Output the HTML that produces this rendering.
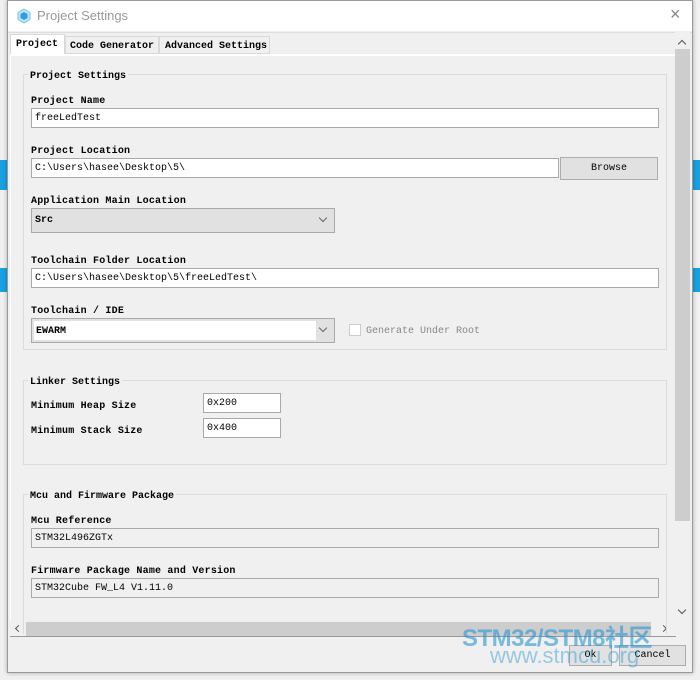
<!DOCTYPE html><html><head><style>
*{box-sizing:border-box;margin:0;padding:0}
body{width:700px;height:680px;background:#f0f0f0;position:relative;overflow:hidden;font-family:"Liberation Mono","Noto Sans CJK SC",monospace;font-size:10px;color:#000}
.a{position:absolute}
.lbl{position:absolute;font-size:10px;font-weight:bold;letter-spacing:0.2px;margin-top:2px}
.inp{position:absolute;background:#fff;border:1px solid #a9a9a9;padding-left:3px;padding-top:2px;line-height:15px;font-size:10px}
.grp{position:absolute;border:1px solid #dcdcdc}
.gt{position:absolute;background:#f0f0f0;padding:0 2px;font-size:10px;font-weight:bold;top:-4px;left:4px}
.btn{position:absolute;background:#e1e1e1;border:1px solid #adadad;text-align:center;font-size:10px}
.chev{position:absolute;width:7px;height:7px;border-right:1.3px solid #555;border-bottom:1.3px solid #555;transform:rotate(45deg)}
</style></head><body>
<div class="a" style="left:0;top:160px;width:7px;height:30px;background:#1aa0e0"></div>
<div class="a" style="left:0;top:268px;width:7px;height:24px;background:#1aa0e0"></div>
<div class="a" style="left:692px;top:160px;width:8px;height:30px;background:#1aa0e0"></div>
<div class="a" style="left:692px;top:268px;width:8px;height:24px;background:#1aa0e0"></div>
<div class="a" style="left:7px;top:0;width:686px;height:673px;background:#f0f0f0;border:1px solid #999;box-shadow:0 0 4px rgba(0,0,0,.3)"></div>
<div class="a" style="left:8px;top:1px;width:684px;height:30px;background:#fff"></div>
<svg class="a" style="left:16px;top:8px" width="16" height="16" viewBox="0 0 16 16"><path d="M8 1L14 4.5V11.5L8 15L2 11.5V4.5Z" fill="#bfe3f5" stroke="#7cc6ea"/><path d="M8 4L11.5 6V10L8 12L4.5 10V6Z" fill="#2d9fdc"/></svg>
<div class="a" style="left:37px;top:8px;font-family:'Liberation Sans',sans-serif;font-size:13px;color:#999">Project Settings</div>
<div class="a" style="left:670px;top:4px;font-family:'Liberation Sans',sans-serif;font-size:18px;color:#888">×</div>
<!-- tabs -->
<div class="a" style="left:8px;top:32px;width:684px;height:1px;background:#ddd"></div>
<div class="a" style="left:10px;top:34px;width:55px;height:22px;background:#fff;border:1px solid #d9d9d9;border-bottom:none;padding:4px 0 0 5px;font-weight:bold">Project</div>
<div class="a" style="left:65px;top:36px;width:94px;height:18px;background:#f0f0f0;border:1px solid #d9d9d9;padding:4px 0 0 4px;font-weight:bold">Code Generator</div>
<div class="a" style="left:159px;top:36px;width:111px;height:18px;background:#f0f0f0;border:1px solid #d9d9d9;padding:4px 0 0 5px;font-weight:bold">Advanced Settings</div>
<div class="a" style="left:10px;top:54px;width:666px;height:2px;background:#fff"></div>
<div class="a" style="left:10px;top:56px;width:666px;height:565px;background:#f0f0f0;border-left:1px solid #fff"></div>
<!-- vertical scrollbar -->
<div class="a" style="left:675px;top:32px;width:15px;height:589px;background:#f0f0f0"></div>
<div class="a" style="left:675px;top:49px;width:15px;height:472px;background:#cdcdcd"></div>
<div class="chev" style="left:679px;top:41px;transform:rotate(225deg);width:6px;height:6px"></div>
<div class="chev" style="left:679px;top:607px;width:6px;height:6px"></div>
<!-- horizontal scrollbar -->
<div class="a" style="left:10px;top:621px;width:666px;height:16px;background:#f0f0f0;border-bottom:1px solid #999"></div>
<div class="a" style="left:26px;top:622px;width:625px;height:14px;background:#cdcdcd"></div>
<div class="chev" style="left:16px;top:626px;transform:rotate(135deg);width:5px;height:5px"></div>
<div class="chev" style="left:661px;top:626px;transform:rotate(-45deg);width:5px;height:5px"></div>
<!-- group 1 -->
<div class="grp" style="left:23px;top:74px;width:644px;height:276px"><div class="gt">Project Settings</div></div>
<div class="lbl" style="left:31px;top:94px">Project Name</div>
<div class="inp" style="left:31px;top:108px;width:628px;height:20px">freeLedTest</div>
<div class="lbl" style="left:31px;top:144px">Project Location</div>
<div class="inp" style="left:31px;top:158px;width:528px;height:20px">C:\Users\hasee\Desktop\5\</div>
<div class="btn" style="left:560px;top:157px;width:98px;height:23px;line-height:22px">Browse</div>
<div class="lbl" style="left:31px;top:194px">Application Main Location</div>
<div class="inp" style="left:31px;top:208px;width:304px;height:25px;background:#e1e1e1;line-height:20px;font-weight:bold">Src</div>
<div class="chev" style="left:320px;top:215px;width:6px;height:6px;border-color:#666;border-width:1px"></div>
<div class="lbl" style="left:31px;top:254px">Toolchain Folder Location</div>
<div class="inp" style="left:31px;top:268px;width:628px;height:20px">C:\Users\hasee\Desktop\5\freeLedTest\</div>
<div class="lbl" style="left:31px;top:304px">Toolchain / IDE</div>
<div class="inp" style="left:31px;top:318px;width:304px;height:25px;background:#e1e1e1;padding:2px"><div style="background:#fff;height:19px;width:282px;line-height:21px;padding-left:2px;font-weight:bold">EWARM</div></div>
<div class="chev" style="left:320px;top:325px;width:6px;height:6px;border-color:#666;border-width:1px"></div>
<div class="a" style="left:349px;top:324px;width:12px;height:12px;border:1px solid #ccc;background:#fff"></div>
<div class="a" style="left:366px;top:326px;color:#888">Generate Under Root</div>
<!-- group 2 -->
<div class="grp" style="left:23px;top:380px;width:644px;height:85px"><div class="gt">Linker Settings</div></div>
<div class="lbl" style="left:31px;top:399px">Minimum Heap Size</div>
<div class="inp" style="left:203px;top:393px;width:78px;height:20px">0x200</div>
<div class="lbl" style="left:31px;top:424px">Minimum Stack Size</div>
<div class="inp" style="left:203px;top:418px;width:78px;height:20px">0x400</div>
<!-- group 3 -->
<div class="grp" style="left:23px;top:494px;width:644px;height:140px;border-bottom:none"><div class="gt">Mcu and Firmware Package</div></div>
<div class="lbl" style="left:31px;top:514px">Mcu Reference</div>
<div class="inp" style="left:31px;top:528px;width:628px;height:20px;background:#f0f0f0">STM32L496ZGTx</div>
<div class="lbl" style="left:31px;top:564px">Firmware Package Name and Version</div>
<div class="inp" style="left:31px;top:578px;width:628px;height:20px;background:#f0f0f0">STM32Cube FW_L4 V1.11.0</div>
<!-- buttons -->
<div class="btn" style="left:569px;top:645px;width:43px;height:21px;line-height:20px">Ok</div>
<div class="btn" style="left:619px;top:645px;width:67px;height:21px;line-height:20px">Cancel</div>
<!-- watermark -->
<div class="a" style="left:462px;top:618px;font-family:'Liberation Sans','Noto Sans CJK SC',sans-serif;font-size:24px;font-weight:bold;color:rgba(40,150,210,.6);letter-spacing:-0.5px">STM32/STM8社区</div>
<div class="a" style="left:490px;top:643px;font-family:'Liberation Sans',sans-serif;font-size:22px;color:rgba(40,150,210,.45)">www.stmcu.org</div>
</body></html>
